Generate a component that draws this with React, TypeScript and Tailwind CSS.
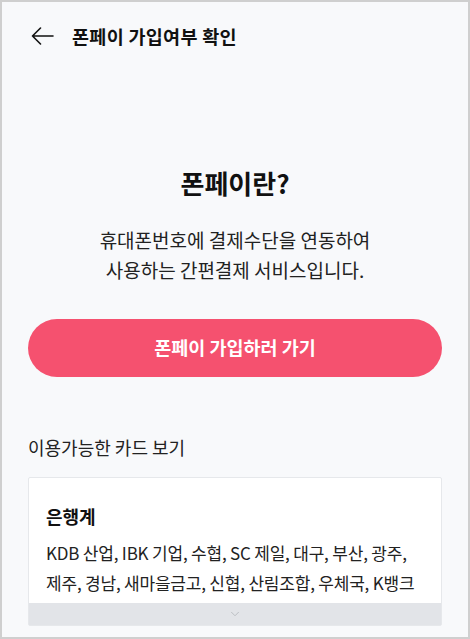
import { ChevronDown } from "lucide-react";

const font = {
  fontFamily: '"Noto Sans CJK KR", "Noto Sans", sans-serif',
};

export default function App() {
  return (
    <div
      className="w-[470px] h-[639px] overflow-hidden border-2 border-[#cfcfcf] bg-[#f8f9fb] text-[#111]"
      style={font}
    >
      <header className="h-[68px] flex items-center pl-[29px]">
        <svg
          width="23"
          height="18"
          viewBox="0 0 23 18"
          fill="none"
          stroke="#111"
          strokeWidth="1.6"
          strokeLinecap="round"
          strokeLinejoin="round"
        >
          <path d="M22 9H1.5M9.5 1L1.5 9l8 8" />
        </svg>
        <h1 className="ml-[18px] text-[18.5px] font-bold leading-none tracking-[0.3px]">
          폰페이 가입여부 확인
        </h1>
      </header>

      <main className="px-[26px]">
        <h2 className="mt-[95px] text-center text-[26px] font-bold leading-[36px]">
          폰페이란?
        </h2>
        <p className="mt-[24px] text-center text-[19px] leading-[30px] text-[#222]">
          휴대폰번호에 결제수단을 연동하여
          <br />
          사용하는 간편결제 서비스입니다.
        </p>

        <button className="mt-[34px] w-full h-[58px] rounded-full bg-[#f5516f] text-white text-[18.5px] font-bold">
          폰페이 가입하러 가기
        </button>

        <div className="mt-[56px] text-[18px] leading-[28px] text-[#222]">
          이용가능한 카드 보기
        </div>

        <section className="mt-[16px] bg-white border border-[#e6e8eb] rounded-[2px]">
          <div className="px-[17px] pt-[24px]">
            <h3 className="text-[18px] font-bold leading-[28px]">은행계</h3>
            <p className="mt-[8px] text-[17px] leading-[30px] text-[#222] tracking-[-0.2px]">
              KDB 산업, IBK 기업, 수협, SC 제일, 대구, 부산, 광주,
              <br />
              제주, 경남, 새마을금고, 신협, 산림조합, 우체국, K뱅크
            </p>
          </div>
          <div className="mt-[5px] h-[22px] bg-[#e2e4e8] flex items-center justify-center">
            <ChevronDown className="w-[14px] h-[14px] text-[#b5b8bd]" strokeWidth={1.5} />
          </div>
        </section>
      </main>
    </div>
  );
}
